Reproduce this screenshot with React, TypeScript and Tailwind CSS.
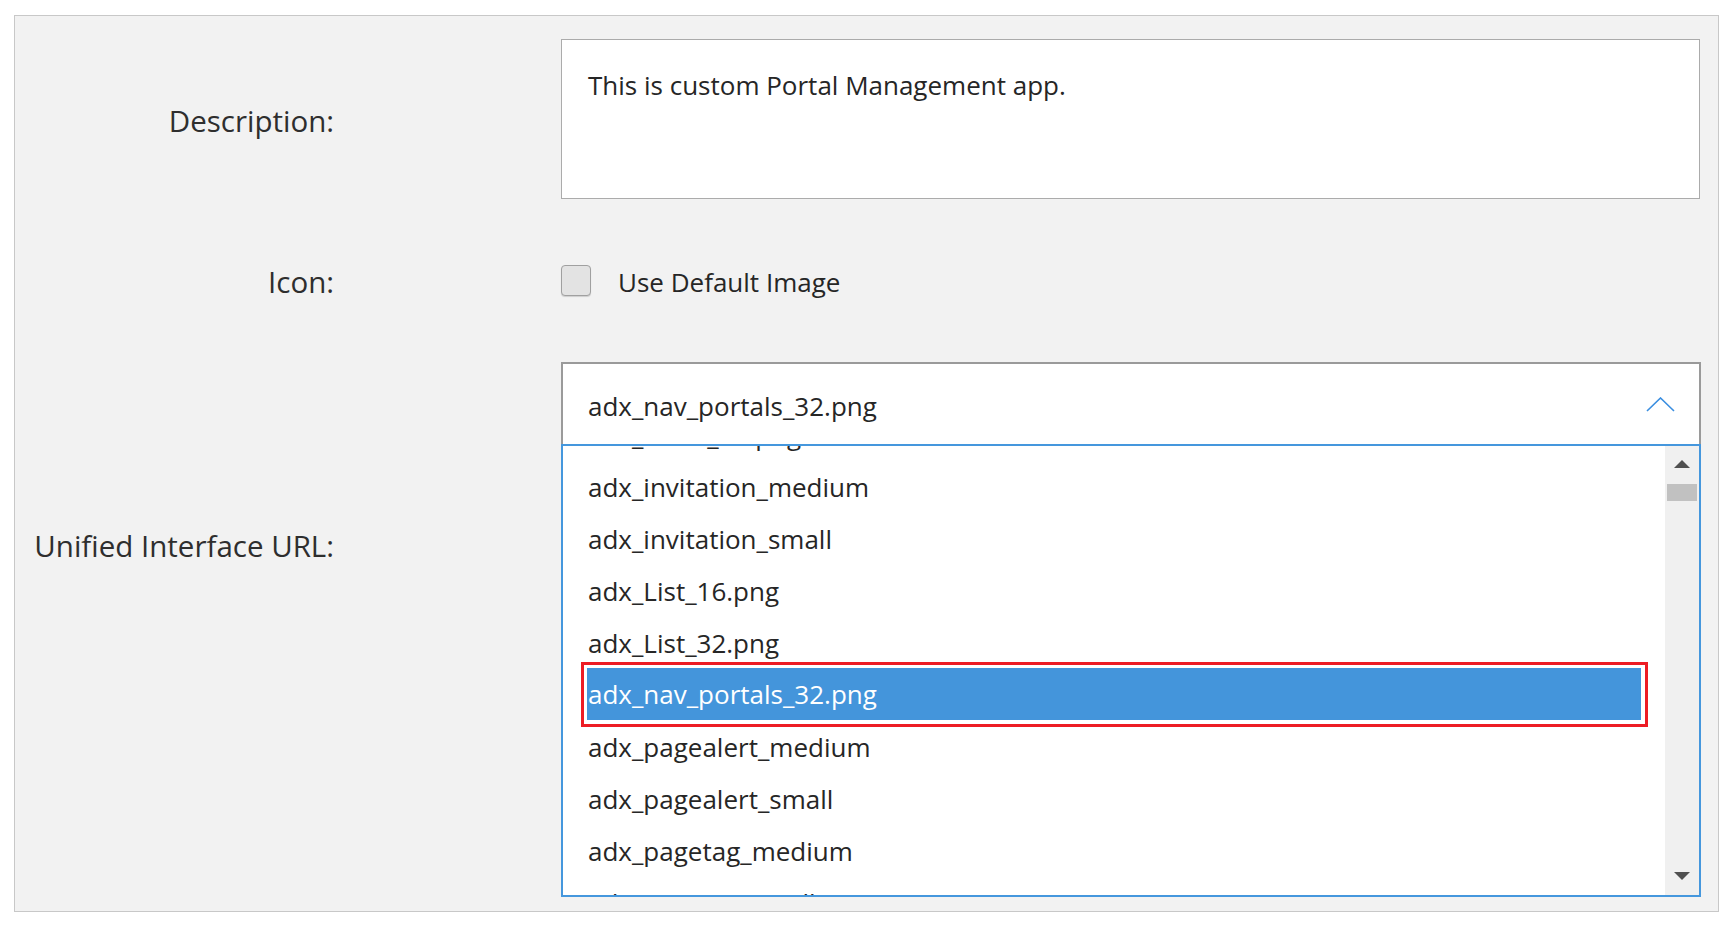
import { FC } from "react";

const items = [
  "adx_ideas_32.png",
  "adx_invitation_medium",
  "adx_invitation_small",
  "adx_List_16.png",
  "adx_List_32.png",
  "adx_nav_portals_32.png",
  "adx_pagealert_medium",
  "adx_pagealert_small",
  "adx_pagetag_medium",
  "adx_pagetag_small",
];

const selected = "adx_nav_portals_32.png";

const Label: FC<{ text: string; offset: string }> = ({ text, offset }) => (
  <div
    className={`w-[319px] shrink-0 text-right text-[29.5px] leading-[40px] text-[#2e2e2e] ${offset}`}
  >
    {text}
  </div>
);

const IconDropdown: FC = () => {
  return (
    <div className="flex flex-col">
      {/* header */}
      <div className="h-[82px] border-2 border-b-0 border-[#9a9a9a] bg-white flex justify-between pl-[25px] pr-[24px]">
        <span className="pt-[24px] text-[26px] leading-[36px] text-[#262626]">
          {selected}
        </span>
        <svg width="29" height="16" viewBox="0 0 29 16" className="mt-[33px]">
          <polyline
            points="1,14 14.5,1 28,14"
            fill="none"
            stroke="#3a8ee0"
            strokeWidth="1.6"
          />
        </svg>
      </div>

      {/* list */}
      <div className="h-[453px] border-2 border-[#4597dd] bg-white flex">
        <div className="flex-1 overflow-hidden">
          <div className="mt-[-37px]">
            {items.map((item) =>
              item === selected ? (
                <div key={item} className="relative mx-[24px] h-[52px] mt-[-1px] mb-[1px] bg-[#4495db]">
                  <span className="block pl-[1px] text-[26px] leading-[52px] text-white">
                    {item}
                  </span>
                  <div className="absolute left-[-6px] right-[-7px] top-[-6px] bottom-[-7px] border-[3px] border-[#ed1c24]" />
                </div>
              ) : (
                <div
                  key={item}
                  className="h-[52px] pl-[25px] text-[26px] leading-[52px] text-[#262626] whitespace-nowrap"
                >
                  {item}
                </div>
              )
            )}
          </div>
        </div>

        {/* scrollbar */}
        <div className="w-[34px] bg-[#f0f0f0] flex flex-col items-center">
          <svg width="16" height="8" viewBox="0 0 16 8" className="mt-[14px]">
            <polygon points="0,8 8,0 16,8" fill="#505050" />
          </svg>
          <div className="mt-[16px] h-[17px] w-[30px] bg-[#c1c1c1]" />
          <div className="flex-1" />
          <svg width="16" height="8" viewBox="0 0 16 8" className="mb-[15px]">
            <polygon points="0,0 16,0 8,8" fill="#505050" />
          </svg>
        </div>
      </div>
    </div>
  );
};

const App: FC = () => {
  return (
    <div className="min-h-[925px] w-[1732px] bg-white pl-[14px] pt-[15px] font-['Open_Sans',sans-serif]">
      <div className="w-[1705px] border border-[#c8c8c8] bg-[#f2f2f2] pt-[23px] pb-[14px]">
        {/* Description */}
        <div className="flex">
          <Label text="Description:" offset="mt-[62px]" />
          <div className="ml-[227px] flex-1 pr-[18px]">
            <div className="h-[160px] border border-[#ababab] bg-white pl-[26px] pt-[27px]">
              <p className="text-[26px] leading-[36px] text-[#262626]">
                This is custom Portal Management app.
              </p>
            </div>
          </div>
        </div>

        {/* Icon */}
        <div className="mt-[63px] flex">
          <Label text="Icon:" offset="" />
          <div className="ml-[227px] flex flex-1 items-start">
            <div className="mt-[3px] h-[31px] w-[30px] rounded-[4px] border border-[#a0a0a0] bg-[#e3e3e3] shadow-[0_1px_1px_rgba(0,0,0,0.15)]" />
            <span className="ml-[27px] mt-[2px] text-[26px] leading-[36px] text-[#262626]">
              Use Default Image
            </span>
          </div>
        </div>

        {/* Unified Interface URL */}
        <div className="mt-[60px] flex">
          <Label text="Unified Interface URL:" offset="mt-[164px]" />
          <div className="ml-[227px] flex-1 pr-[17px]">
            <IconDropdown />
          </div>
        </div>
      </div>
    </div>
  );
};

export default App;
